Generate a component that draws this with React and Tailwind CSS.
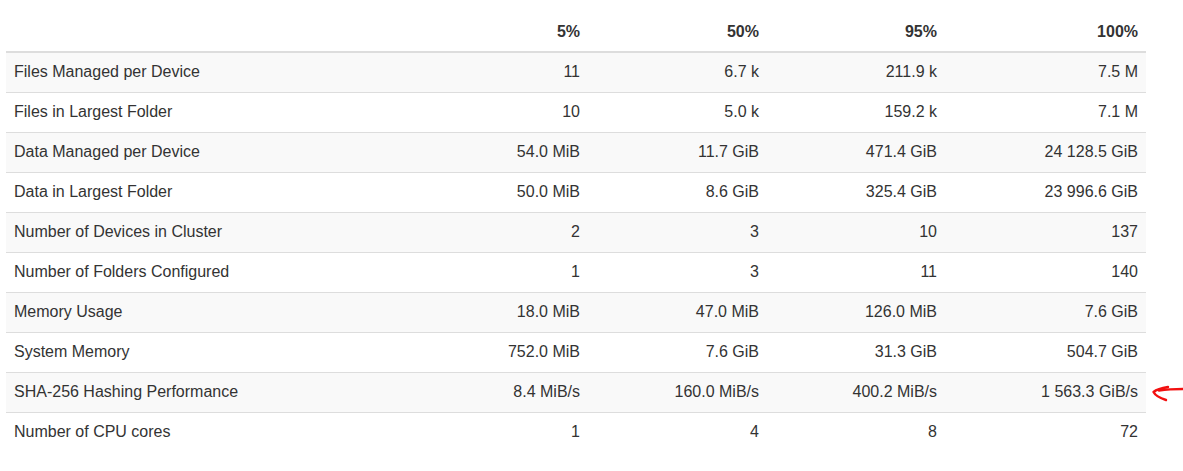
import React from "react";

const rows = [
  ["Files Managed per Device", "11", "6.7 k", "211.9 k", "7.5 M"],
  ["Files in Largest Folder", "10", "5.0 k", "159.2 k", "7.1 M"],
  ["Data Managed per Device", "54.0 MiB", "11.7 GiB", "471.4 GiB", "24 128.5 GiB"],
  ["Data in Largest Folder", "50.0 MiB", "8.6 GiB", "325.4 GiB", "23 996.6 GiB"],
  ["Number of Devices in Cluster", "2", "3", "10", "137"],
  ["Number of Folders Configured", "1", "3", "11", "140"],
  ["Memory Usage", "18.0 MiB", "47.0 MiB", "126.0 MiB", "7.6 GiB"],
  ["System Memory", "752.0 MiB", "7.6 GiB", "31.3 GiB", "504.7 GiB"],
  ["SHA-256 Hashing Performance", "8.4 MiB/s", "160.0 MiB/s", "400.2 MiB/s", "1 563.3 GiB/s"],
  ["Number of CPU cores", "1", "4", "8", "72"],
];

export default function App() {
  return (
    <div className="relative w-[1183px] h-[471px] bg-white text-[#333] text-[16px] font-['Liberation_Sans',Arial,sans-serif]">
      <div className="pt-[12px] pl-[6px]">
        <table className="w-[1140px] border-collapse table-fixed">
          <colgroup>
            <col className="w-[403px]" />
            <col className="w-[179px]" />
            <col className="w-[179px]" />
            <col className="w-[178px]" />
            <col className="w-[201px]" />
          </colgroup>
          <thead>
            <tr className="border-b-2 border-[#ddd]">
              <th className="h-[40px] px-2 text-left font-bold"></th>
              <th className="h-[40px] px-2 text-right font-bold">5%</th>
              <th className="h-[40px] px-2 text-right font-bold">50%</th>
              <th className="h-[40px] px-2 text-right font-bold">95%</th>
              <th className="h-[40px] px-2 text-right font-bold">100%</th>
            </tr>
          </thead>
          <tbody>
            {rows.map((r, i) => (
              <tr
                key={r[0]}
                className={`${i % 2 === 0 ? "bg-[#f9f9f9]" : "bg-white"} ${i < rows.length - 1 ? "border-b border-[#ddd]" : ""}`}
              >
                {r.map((c, j) => (
                  <td
                    key={j}
                    className={`h-[40px] px-2 leading-5 ${j === 0 ? "text-left" : "text-right"}`}
                  >
                    {c}
                  </td>
                ))}
              </tr>
            ))}
          </tbody>
        </table>
      </div>
      {/* red arrow annotation */}
      <svg
        className="absolute left-[1150px] top-[382px]"
        width="33"
        height="22"
        viewBox="0 0 33 22"
        fill="none"
        stroke="#f21010"
        strokeWidth="2.4"
        strokeLinecap="round"
        strokeLinejoin="round"
      >
        <path d="M33 7 C 26 7, 16 7.5, 9 8.5" />
        <path d="M18 5 C 12 6, 6 8, 3.5 10 C 5 13, 10 16, 16 18" />
      </svg>
    </div>
  );
}
